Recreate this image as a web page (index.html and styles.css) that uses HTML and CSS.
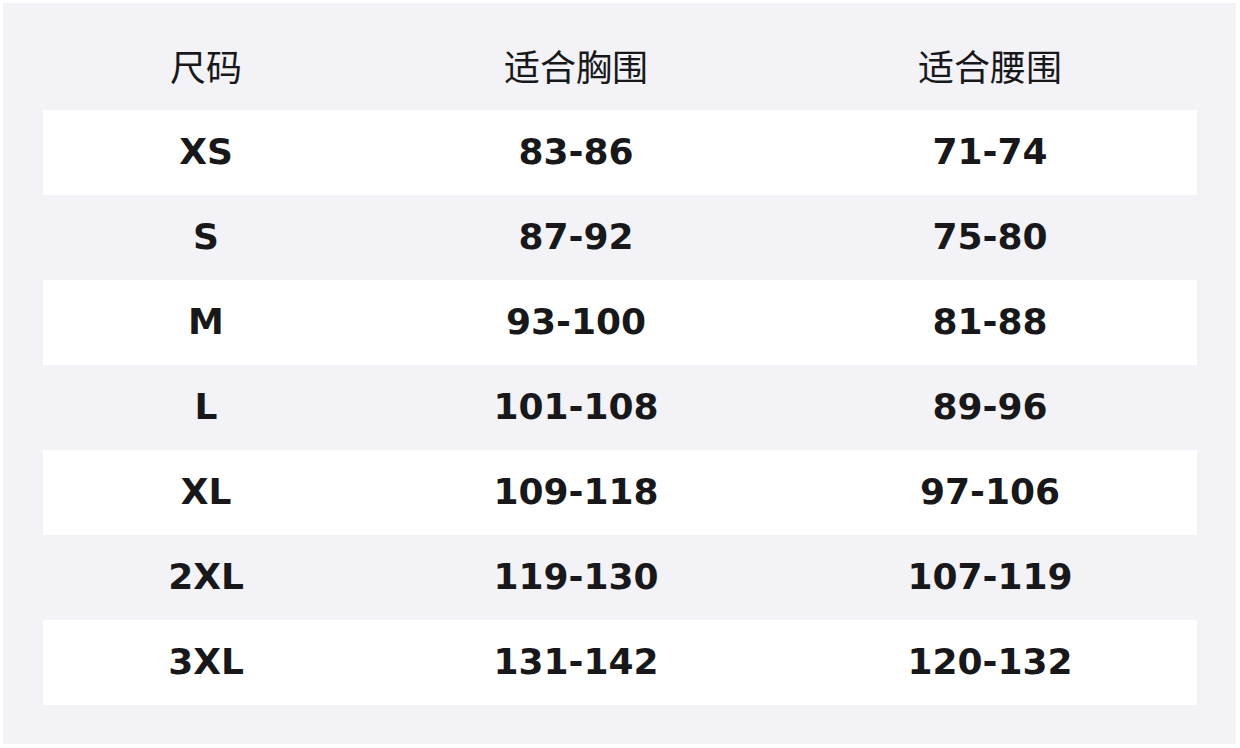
FILE: index.html
```html
<!DOCTYPE html>
<html lang="zh">
<head>
<meta charset="utf-8">
<title>尺码表</title>
<link rel="stylesheet" href="styles.css">
</head>
<body>
<div class="panel">
  <table class="size-table">
    <colgroup>
      <col class="c-size">
      <col class="c-chest">
      <col class="c-waist">
    </colgroup>
    <thead>
      <tr><th>尺码</th><th>适合胸围</th><th>适合腰围</th></tr>
    </thead>
    <tbody>
      <tr><td>XS</td><td>83-86</td><td>71-74</td></tr>
      <tr><td>S</td><td>87-92</td><td>75-80</td></tr>
      <tr><td>M</td><td>93-100</td><td>81-88</td></tr>
      <tr><td>L</td><td>101-108</td><td>89-96</td></tr>
      <tr><td>XL</td><td>109-118</td><td>97-106</td></tr>
      <tr><td>2XL</td><td>119-130</td><td>107-119</td></tr>
      <tr><td>3XL</td><td>131-142</td><td>120-132</td></tr>
    </tbody>
  </table>
</div>
</body>
</html>
```
FILE: styles.css
```css
html, body {
  margin: 0;
  padding: 0;
  background: #ffffff;
}
body {
  padding: 3px 4px 4px 3px;
  width: 1233px;
  height: 741px;
}
.panel {
  width: 1233px;
  height: 741px;
  box-sizing: border-box;
  background: #f2f2f7;
  padding: 22px 39px 0 40px;
}
.size-table {
  width: 1154px;
  border-collapse: collapse;
  table-layout: fixed;
  color: #18181b;
}
.c-size { width: 326px; }
.c-chest { width: 414px; }
.c-waist { width: 414px; }
.size-table th,
.size-table td {
  height: 85px;
  padding: 0;
  text-align: center;
  vertical-align: middle;
  font-size: 36px;
  line-height: 1;
}
.size-table th {
  font-family: "Noto Sans CJK SC", "DejaVu Sans", sans-serif;
  font-weight: 400;
  padding-bottom: 6px;
  height: 79px;
}
.size-table td {
  font-family: "DejaVu Sans", sans-serif;
  font-weight: 700;
  padding-bottom: 2px;
  height: 83px;
}
.size-table tbody tr:nth-child(odd) {
  background: #ffffff;
}
.size-table tbody tr:nth-child(even) {
  background: #f2f2f7;
}
```
